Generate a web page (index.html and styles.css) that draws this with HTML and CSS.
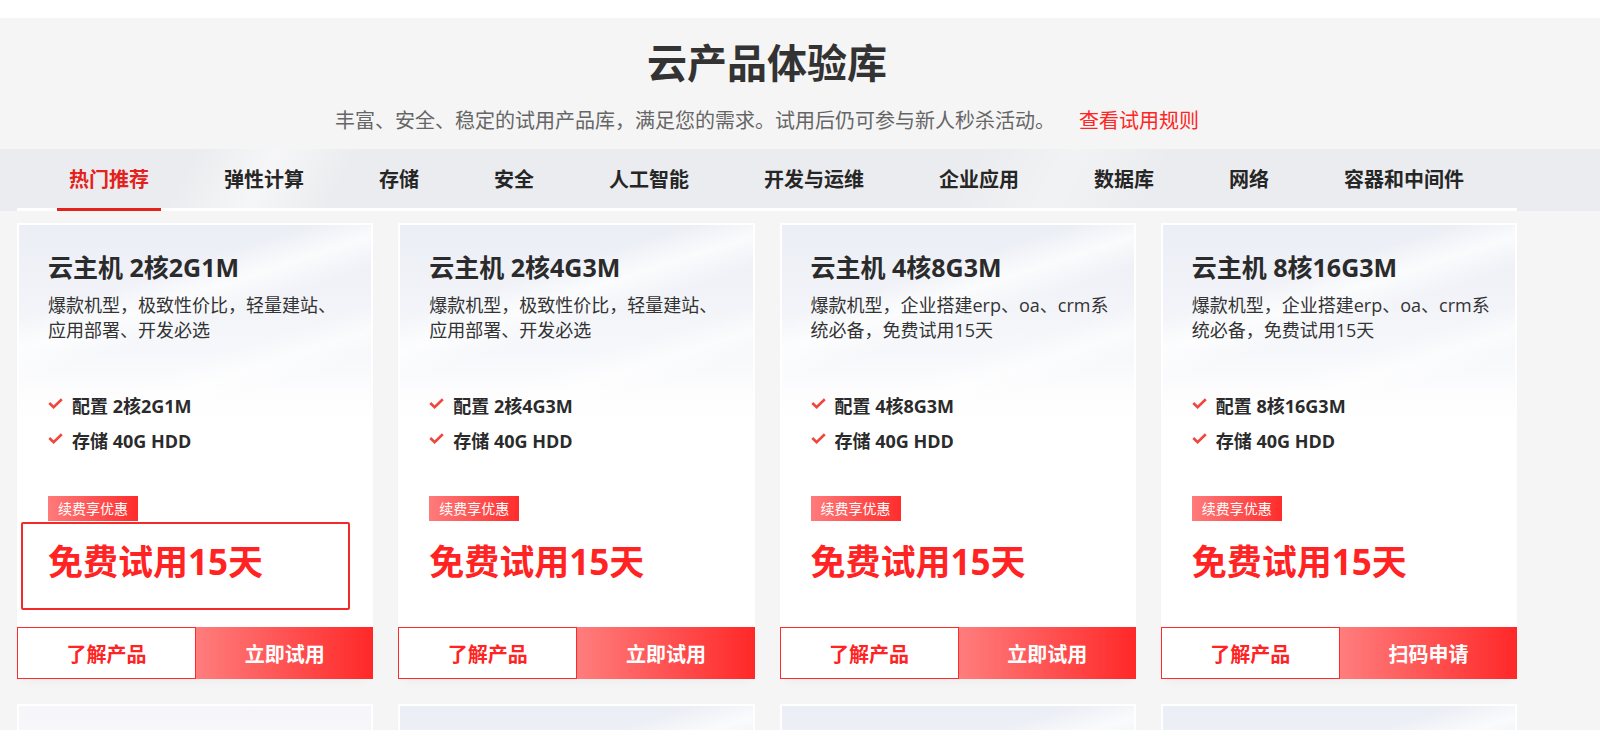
FILE: index.html
```html
<!DOCTYPE html>
<html lang="zh-CN">
<head>
<meta charset="utf-8">
<title>云产品体验库</title>
<link rel="stylesheet" href="styles.css">
</head>
<body>
<div class="topstrip"></div>
<section class="page">
  <header class="head wrap">
    <h1 class="head-title">云产品体验库</h1>
    <p class="head-sub">丰富、安全、稳定的试用产品库，满足您的需求。试用后仍可参与新人秒杀活动。<a class="head-link" href="#">查看试用规则</a></p>
  </header>
  <nav class="tabbar">
    <ul class="tabs wrap">
      <li class="tab active">热门推荐</li>
      <li class="tab">弹性计算</li>
      <li class="tab">存储</li>
      <li class="tab">安全</li>
      <li class="tab">人工智能</li>
      <li class="tab">开发与运维</li>
      <li class="tab">企业应用</li>
      <li class="tab">数据库</li>
      <li class="tab">网络</li>
      <li class="tab">容器和中间件</li>
    </ul>
  </nav>
  <div class="grid wrap">
    <div class="card">
      <div class="card-body">
        <h3 class="card-title">云主机 2核2G1M</h3>
        <p class="card-desc">爆款机型，极致性价比，轻量建站、应用部署、开发必选</p>
        <ul class="feats">
          <li class="feat"><svg class="chk" viewBox="0 0 15 11" width="15" height="11"><path d="M1.3 5 L5.6 9.2 L13.8 1.3" fill="none" stroke="#f0463c" stroke-width="2.6"/></svg>配置 2核2G1M</li>
          <li class="feat"><svg class="chk" viewBox="0 0 15 11" width="15" height="11"><path d="M1.3 5 L5.6 9.2 L13.8 1.3" fill="none" stroke="#f0463c" stroke-width="2.6"/></svg>存储 40G HDD</li>
        </ul>
        <span class="badge">续费享优惠</span>
        <div class="price">免费试用15天</div>
      </div>
      <div class="btns">
        <a class="btn btn-ghost" href="#">了解产品</a>
        <a class="btn btn-solid" href="#">立即试用</a>
      </div>
      <div class="mark"></div>
    </div>
    <div class="card">
      <div class="card-body">
        <h3 class="card-title">云主机 2核4G3M</h3>
        <p class="card-desc">爆款机型，极致性价比，轻量建站、应用部署、开发必选</p>
        <ul class="feats">
          <li class="feat"><svg class="chk" viewBox="0 0 15 11" width="15" height="11"><path d="M1.3 5 L5.6 9.2 L13.8 1.3" fill="none" stroke="#f0463c" stroke-width="2.6"/></svg>配置 2核4G3M</li>
          <li class="feat"><svg class="chk" viewBox="0 0 15 11" width="15" height="11"><path d="M1.3 5 L5.6 9.2 L13.8 1.3" fill="none" stroke="#f0463c" stroke-width="2.6"/></svg>存储 40G HDD</li>
        </ul>
        <span class="badge">续费享优惠</span>
        <div class="price">免费试用15天</div>
      </div>
      <div class="btns">
        <a class="btn btn-ghost" href="#">了解产品</a>
        <a class="btn btn-solid" href="#">立即试用</a>
      </div>
    </div>
    <div class="card">
      <div class="card-body">
        <h3 class="card-title">云主机 4核8G3M</h3>
        <p class="card-desc">爆款机型，企业搭建erp、oa、crm系统必备，免费试用15天</p>
        <ul class="feats">
          <li class="feat"><svg class="chk" viewBox="0 0 15 11" width="15" height="11"><path d="M1.3 5 L5.6 9.2 L13.8 1.3" fill="none" stroke="#f0463c" stroke-width="2.6"/></svg>配置 4核8G3M</li>
          <li class="feat"><svg class="chk" viewBox="0 0 15 11" width="15" height="11"><path d="M1.3 5 L5.6 9.2 L13.8 1.3" fill="none" stroke="#f0463c" stroke-width="2.6"/></svg>存储 40G HDD</li>
        </ul>
        <span class="badge">续费享优惠</span>
        <div class="price">免费试用15天</div>
      </div>
      <div class="btns">
        <a class="btn btn-ghost" href="#">了解产品</a>
        <a class="btn btn-solid" href="#">立即试用</a>
      </div>
    </div>
    <div class="card">
      <div class="card-body">
        <h3 class="card-title">云主机 8核16G3M</h3>
        <p class="card-desc">爆款机型，企业搭建erp、oa、crm系统必备，免费试用15天</p>
        <ul class="feats">
          <li class="feat"><svg class="chk" viewBox="0 0 15 11" width="15" height="11"><path d="M1.3 5 L5.6 9.2 L13.8 1.3" fill="none" stroke="#f0463c" stroke-width="2.6"/></svg>配置 8核16G3M</li>
          <li class="feat"><svg class="chk" viewBox="0 0 15 11" width="15" height="11"><path d="M1.3 5 L5.6 9.2 L13.8 1.3" fill="none" stroke="#f0463c" stroke-width="2.6"/></svg>存储 40G HDD</li>
        </ul>
        <span class="badge">续费享优惠</span>
        <div class="price">免费试用15天</div>
      </div>
      <div class="btns">
        <a class="btn btn-ghost" href="#">了解产品</a>
        <a class="btn btn-solid" href="#">扫码申请</a>
      </div>
    </div>

    <div class="card card-alt"></div>
    <div class="card"></div>
    <div class="card"></div>
    <div class="card"></div>
  </div>
</section>
</body>
</html>
```

FILE: styles.css
```css
* { box-sizing: border-box; }
html, body { margin: 0; padding: 0; }
body {
  background: #ffffff;
  font-family: "Open Sans", "Noto Sans CJK SC", sans-serif;
  color: #333;
  overflow: hidden;
}
.topstrip { height: 18px; background: #fff; }
.page { background: #f5f5f5; min-height: 712px; }
.wrap { width: 1500px; margin-left: 17px; }

.head { padding-top: 17px; text-align: center; }
.head-title {
  margin: 0;
  font-size: 40px;
  line-height: 56px;
  font-weight: 700;
  color: #333;
}
.head-sub {
  margin: 16px 0 0;
  font-size: 20px;
  line-height: 28px;
  color: #666;
}
.head-link { color: #ff2525; text-decoration: none; margin-left: 24px; }

.tabbar {
  margin-top: 14px;
  height: 62px;
  background:
    linear-gradient(118deg, rgba(255,255,255,0) 12%, rgba(255,255,255,.55) 17%, rgba(255,255,255,0) 22%, rgba(255,255,255,0) 60%, rgba(255,255,255,.35) 66%, rgba(255,255,255,0) 72%),
    #ebecef;
}
.tabs {
  list-style: none;
  margin-top: 0;
  margin-bottom: 0;
  padding: 0 0 0 40px;
  display: flex;
  gap: 51px;
  height: 62px;
  border-bottom: 3px solid #fff;
}
.tab {
  padding: 3px 12px 0;
  line-height: 56px;
  height: 62px;
  font-size: 20px;
  font-weight: 700;
  color: #262626;
  white-space: nowrap;
}
.tab.active { color: #e4211b; border-bottom: 3px solid #e4211b; }

.grid {
  margin-top: 12px;
  display: grid;
  grid-template-columns: repeat(4, 1fr);
  column-gap: 25px;
  row-gap: 25px;
}
.card {
  position: relative;
  height: 456px;
  display: flex;
  flex-direction: column;
  background:
    linear-gradient(162deg, rgba(255,255,255,0) 30%, rgba(255,255,255,.75) 40%, rgba(255,255,255,0) 50%, rgba(255,255,255,0) 62%, rgba(255,255,255,.6) 70%, rgba(255,255,255,0) 78%) 2px 2px / calc(100% - 4px) 200px no-repeat,
    linear-gradient(180deg, #ebeef5 0px, #f1f3f8 70px, #f7f8fb 130px, #fdfdfe 170px, #ffffff 200px) 2px 2px / calc(100% - 4px) 220px no-repeat,
    #ffffff;
  box-shadow: 0 8px 10px -6px rgba(0,0,0,.04);
}
.card-alt {
  background:
    linear-gradient(180deg, #f6f6fa 0px, #fafafc 120px, #ffffff 200px) 2px 2px / calc(100% - 4px) 220px no-repeat,
    #ffffff;
}
.card-body { padding: 28px 22px 0 31px; flex: 1; display: flex; flex-direction: column; align-items: flex-start; }
.card-title {
  margin: 0;
  font-size: 25px;
  line-height: 32px;
  font-weight: 700;
  color: #2b2b2b;
}
.card-desc {
  margin: 10px 0 0;
  font-size: 18px;
  line-height: 25px;
  color: #333;
}
.feats { list-style: none; margin: 44px 0 0; padding: 0; }
.feat {
  display: flex;
  align-items: center;
  height: 35px;
  font-size: 18px;
  font-weight: 700;
  color: #2b2b2b;
}
.chk { margin-right: 9px; flex: none; position: relative; top: -1px; }
.badge {
  margin-top: 39px;
  display: inline-block;
  height: 25px;
  line-height: 25px;
  padding: 0 10px;
  font-size: 14px;
  color: #fff;
  background: linear-gradient(90deg, #ff7b7b 0%, #ff2c2c 100%);
}
.price {
  margin-top: 16px;
  font-size: 35px;
  line-height: 50px;
  font-weight: 700;
  color: #ff2323;
}
.btns { display: flex; height: 52px; }
.btn {
  flex: 1;
  display: flex;
  align-items: center;
  justify-content: center;
  font-size: 20px;
  font-weight: 700;
  text-decoration: none;
}
.btn-ghost { background: #fff; color: #ff2323; border: 1px solid #ff2a2a; }
.btn-solid { background: linear-gradient(90deg, #ff7d7d 0%, #ff2828 100%); color: #fff; }

.mark {
  position: absolute;
  left: 4px;
  top: 299px;
  width: 329px;
  height: 88px;
  border: 2px solid #f42a2a;
  border-radius: 2px;
  pointer-events: none;
}
```
